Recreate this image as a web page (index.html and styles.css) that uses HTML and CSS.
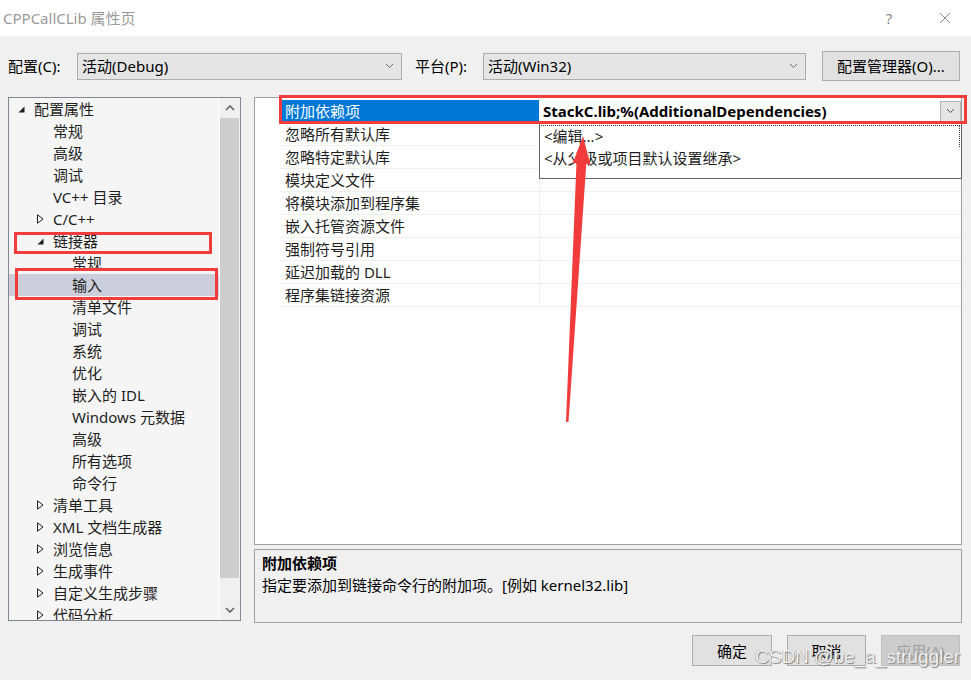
FILE: index.html
```html
<!DOCTYPE html>
<html lang="zh-CN">
<head>
<meta charset="utf-8">
<title>CPPCallCLib 属性页</title>
<link rel="stylesheet" href="styles.css">
</head>
<body>
<div class="titlebar">
  <span class="title">CPPCallCLib 属性页</span>
  <span class="help">?</span>
  <svg class="close" width="12" height="12" viewBox="0 0 12 12"><path d="M1 1L11 11M11 1L1 11" stroke="#8a8a8a" stroke-width="1" fill="none"/></svg>
</div>

<div class="toolbar">
  <span class="lbl lbl-cfg">配置(C):</span>
  <div class="select sel-cfg"><span class="sel-text">活动(Debug)</span><svg class="chev" width="9" height="6" viewBox="0 0 9 6"><path d="M1 1L4.5 4.5L8 1" stroke="#6d6d6d" fill="none"/></svg></div>
  <span class="lbl lbl-plat">平台(P):</span>
  <div class="select sel-plat"><span class="sel-text">活动(Win32)</span><svg class="chev" width="9" height="6" viewBox="0 0 9 6"><path d="M1 1L4.5 4.5L8 1" stroke="#6d6d6d" fill="none"/></svg></div>
  <div class="btn btn-mgr">配置管理器(O)...</div>
</div>

<div class="main">
  <div class="tree">
    <div class="tree-list">
      <div class="node l0"><span class="tw"><svg width="7" height="7" viewBox="0 0 7 7"><path d="M6.5 0.5V6.5H0.5Z" fill="#1e1e1e"/></svg></span>配置属性</div>
      <div class="node l1"><span class="tw"></span>常规</div>
      <div class="node l1"><span class="tw"></span>高级</div>
      <div class="node l1"><span class="tw"></span>调试</div>
      <div class="node l1"><span class="tw"></span>VC++ 目录</div>
      <div class="node l1"><span class="tw"><svg width="7" height="10" viewBox="0 0 7 10"><path d="M0.5 0.8L6 5L0.5 9.2Z" fill="none" stroke="#1e1e1e"/></svg></span>C/C++</div>
      <div class="node l1"><span class="tw"><svg width="7" height="7" viewBox="0 0 7 7"><path d="M6.5 0.5V6.5H0.5Z" fill="#1e1e1e"/></svg></span>链接器</div>
      <div class="node l2"><span class="tw"></span>常规</div>
      <div class="node l2 selected"><span class="tw"></span>输入</div>
      <div class="node l2"><span class="tw"></span>清单文件</div>
      <div class="node l2"><span class="tw"></span>调试</div>
      <div class="node l2"><span class="tw"></span>系统</div>
      <div class="node l2"><span class="tw"></span>优化</div>
      <div class="node l2"><span class="tw"></span>嵌入的 IDL</div>
      <div class="node l2"><span class="tw"></span>Windows 元数据</div>
      <div class="node l2"><span class="tw"></span>高级</div>
      <div class="node l2"><span class="tw"></span>所有选项</div>
      <div class="node l2"><span class="tw"></span>命令行</div>
      <div class="node l1"><span class="tw"><svg width="7" height="10" viewBox="0 0 7 10"><path d="M0.5 0.8L6 5L0.5 9.2Z" fill="none" stroke="#1e1e1e"/></svg></span>清单工具</div>
      <div class="node l1"><span class="tw"><svg width="7" height="10" viewBox="0 0 7 10"><path d="M0.5 0.8L6 5L0.5 9.2Z" fill="none" stroke="#1e1e1e"/></svg></span>XML 文档生成器</div>
      <div class="node l1"><span class="tw"><svg width="7" height="10" viewBox="0 0 7 10"><path d="M0.5 0.8L6 5L0.5 9.2Z" fill="none" stroke="#1e1e1e"/></svg></span>浏览信息</div>
      <div class="node l1"><span class="tw"><svg width="7" height="10" viewBox="0 0 7 10"><path d="M0.5 0.8L6 5L0.5 9.2Z" fill="none" stroke="#1e1e1e"/></svg></span>生成事件</div>
      <div class="node l1"><span class="tw"><svg width="7" height="10" viewBox="0 0 7 10"><path d="M0.5 0.8L6 5L0.5 9.2Z" fill="none" stroke="#1e1e1e"/></svg></span>自定义生成步骤</div>
      <div class="node l1"><span class="tw"><svg width="7" height="10" viewBox="0 0 7 10"><path d="M0.5 0.8L6 5L0.5 9.2Z" fill="none" stroke="#1e1e1e"/></svg></span>代码分析</div>
    </div>
    <div class="scrollbar">
      <div class="sb-arrow"><svg width="10" height="6" viewBox="0 0 10 6"><path d="M1 5L5 1L9 5" stroke="#606060" stroke-width="1.6" fill="none"/></svg></div>
      <div class="sb-thumb"></div>
      <div class="sb-track"></div>
      <div class="sb-arrow"><svg width="10" height="6" viewBox="0 0 10 6"><path d="M1 1L5 5L9 1" stroke="#606060" stroke-width="1.6" fill="none"/></svg></div>
    </div>
    <div class="mark mark-linker"></div>
    <div class="mark mark-input"></div>
  </div>

  <div class="right">
    <div class="grid">
      <div class="rows">
        <div class="row active"><div class="name">附加依赖项</div><div class="value"><span class="val-bold">StackC.lib;%(AdditionalDependencies)</span><span class="dd-btn"><svg width="9" height="6" viewBox="0 0 9 6"><path d="M1 1L4.5 4.5L8 1" stroke="#555" fill="none"/></svg></span></div></div>
        <div class="row"><div class="name">忽略所有默认库</div><div class="value"></div></div>
        <div class="row"><div class="name">忽略特定默认库</div><div class="value"></div></div>
        <div class="row"><div class="name">模块定义文件</div><div class="value"></div></div>
        <div class="row"><div class="name">将模块添加到程序集</div><div class="value"></div></div>
        <div class="row"><div class="name">嵌入托管资源文件</div><div class="value"></div></div>
        <div class="row"><div class="name">强制符号引用</div><div class="value"></div></div>
        <div class="row"><div class="name">延迟加载的 DLL</div><div class="value"></div></div>
        <div class="row"><div class="name">程序集链接资源</div><div class="value"></div></div>
      </div>
      <div class="dropdown">
        <div class="dd-item focus">&lt;编辑...&gt;</div>
        <div class="dd-item">&lt;从父级或项目默认设置继承&gt;</div>
      </div>
      <div class="mark mark-row"></div>
    </div>
    <div class="desc">
      <div class="desc-title">附加依赖项</div>
      <div class="desc-text">指定要添加到链接命令行的附加项。[例如 kernel32.lib]</div>
    </div>
  </div>
</div>

<div class="footer">
  <div class="btn btn-foot">确定</div>
  <div class="btn btn-foot">取消</div>
  <div class="btn btn-foot disabled">应用(A)</div>
</div>

<svg class="arrow" width="971" height="680" viewBox="0 0 971 680"><path d="M583 136L590.5 165L586.3 163.5L568.5 422L566 422L576.5 162.5L572.5 164Z" fill="#f23b3b"/></svg>
<div class="watermark">CSDN @be_a_struggler</div>
</body>
</html>
```

FILE: styles.css
```css
* { box-sizing: border-box; }

body {
  margin: 0;
  width: 971px;
  height: 680px;
  overflow: hidden;
  position: relative;
  background: #f0f0f0;
  font-family: "Noto Sans", "Noto Sans CJK SC", sans-serif;
  font-size: 15px;
  color: #000;
}

/* title bar */
.titlebar {
  height: 36px;
  background: #fff;
  display: flex;
  align-items: center;
  padding-left: 3px;
  padding-right: 20px;
}
.title {
  flex: 1;
  color: #9a9a9a;
  font-size: 15px;
  line-height: 36px;
}
.help {
  width: 20px;
  text-align: center;
  color: #8a8a8a;
  font-size: 15px;
  margin-right: 40px;
  line-height: 36px;
}
.close { display: block; }

/* toolbar */
.toolbar {
  display: flex;
  align-items: center;
  height: 30px;
  margin-top: 15px;
  padding-left: 8px;
  line-height: 20px;
}
.lbl-cfg { width: 69px; }
.lbl-plat { width: 68px; margin-left: 13px; }
.select {
  height: 27px;
  background: #e5e5e5;
  border: 1px solid #adadad;
  display: flex;
  align-items: center;
  padding-left: 4px;
  padding-right: 7px;
}
.sel-text { flex: 1; }
.sel-cfg { width: 325px; }
.sel-plat { width: 323px; }
.btn {
  background: #e1e1e1;
  border: 1px solid #adadad;
  display: flex;
  align-items: center;
  justify-content: center;
}
.btn-mgr {
  width: 138px;
  height: 30px;
  margin-left: 16px;
}

/* main area */
.main {
  display: flex;
  margin-top: 16px;
  padding-left: 8px;
}
.tree {
  position: relative;
  width: 233px;
  height: 524px;
  border: 1px solid #828790;
  background: #f5f5f5;
  display: flex;
}
.tree-list {
  flex: 1;
  overflow: hidden;
}
.node {
  height: 22px;
  line-height: 22px;
  display: flex;
  align-items: center;
  white-space: nowrap;
  color: #1e1e1e;
}
.node.l0 { padding-left: 9px; }
.node.l1 { padding-left: 28px; }
.node.l2 { padding-left: 47px; }
.node.selected { background: #cccedb; }
.tw {
  width: 16px;
  height: 22px;
  flex: none;
  display: flex;
  align-items: center;
}
.tw svg { display: block; }

.scrollbar {
  width: 21px;
  border-left: 1px solid #ffffff;
  background: #f0f0f0;
  display: flex;
  flex-direction: column;
}
.sb-arrow {
  height: 20px;
  display: flex;
  align-items: center;
  justify-content: center;
}
.sb-thumb {
  height: 460px;
  background: #cdcdcd;
  margin-right: 1px;
}
.sb-track { flex: 1; }

/* annotation boxes */
.mark {
  position: absolute;
  border: 3px solid #f23b3b;
  pointer-events: none;
}
.mark-linker { left: 5px; top: 134px; width: 198px; height: 22px; }
.mark-input { left: 6px; top: 170px; width: 203px; height: 32px; }
.mark-row { left: 24px; top: -3px; width: 688px; height: 29px; }

/* right column */
.right {
  margin-left: 13px;
  width: 708px;
  display: flex;
  flex-direction: column;
}
.grid {
  position: relative;
  height: 448px;
  border: 1px solid #a0a0a0;
  background: #fff;
  padding-top: 2px;
  padding-left: 25px;
}
.row {
  display: flex;
  height: 23px;
  border-bottom: 1px solid #f0f0f0;
}
.name {
  width: 259px;
  padding-left: 5px;
  line-height: 22px;
  color: #1e1e1e;
  white-space: nowrap;
}
.value {
  flex: 1;
  border-left: 1px solid #f0f0f0;
  padding-left: 3px;
  line-height: 22px;
  display: flex;
  align-items: center;
}
.row.active .name {
  background: #0078d7;
  color: #fff;
}
.val-bold {
  flex: 1;
  font-weight: 700;
}
.dd-btn {
  width: 21px;
  height: 21px;
  background: #e5e5e5;
  border: 1px solid #b4b4b4;
  display: flex;
  align-items: center;
  justify-content: center;
}

.dropdown {
  position: absolute;
  left: 284px;
  top: 25px;
  width: 423px;
  height: 56px;
  background: #fff;
  border: 1px solid #646464;
  padding: 1px 1px 0 1px;
}
.dd-item {
  height: 22px;
  line-height: 22px;
  padding-left: 3px;
  color: #1e1e1e;
}
.dd-item.focus {
  border-top: 1px dotted #333;
  border-right: 1px dotted #333;
  line-height: 21px;
}

.desc {
  margin-top: 4px;
  height: 74px;
  border: 1px solid #a0a0a0;
  background: #f0f0f0;
  padding: 2px 7px 0;
}
.desc-title {
  font-weight: 700;
  line-height: 22px;
}
.desc-text {
  line-height: 22px;
}

/* footer */
.footer {
  display: flex;
  justify-content: flex-end;
  gap: 15px;
  margin-top: 12px;
  padding-right: 11px;
}
.btn-foot {
  width: 79px;
  height: 31px;
}
.btn-foot:first-child { width: 80px; }
.btn-foot.disabled {
  background: #cccccc;
  border-color: #bfbfbf;
  color: #a0a0a0;
}

/* overlays */
.arrow {
  position: absolute;
  left: 0;
  top: 0;
  pointer-events: none;
}
.watermark {
  position: absolute;
  left: 755px;
  top: 646px;
  font-family: "Liberation Sans", Arial, sans-serif;
  font-size: 19px;
  color: #f2f2f2;
  text-shadow: 1px 1px 1px #808080, -0.5px -0.5px 0 #a0a0a0;
  white-space: nowrap;
  pointer-events: none;
}
```
